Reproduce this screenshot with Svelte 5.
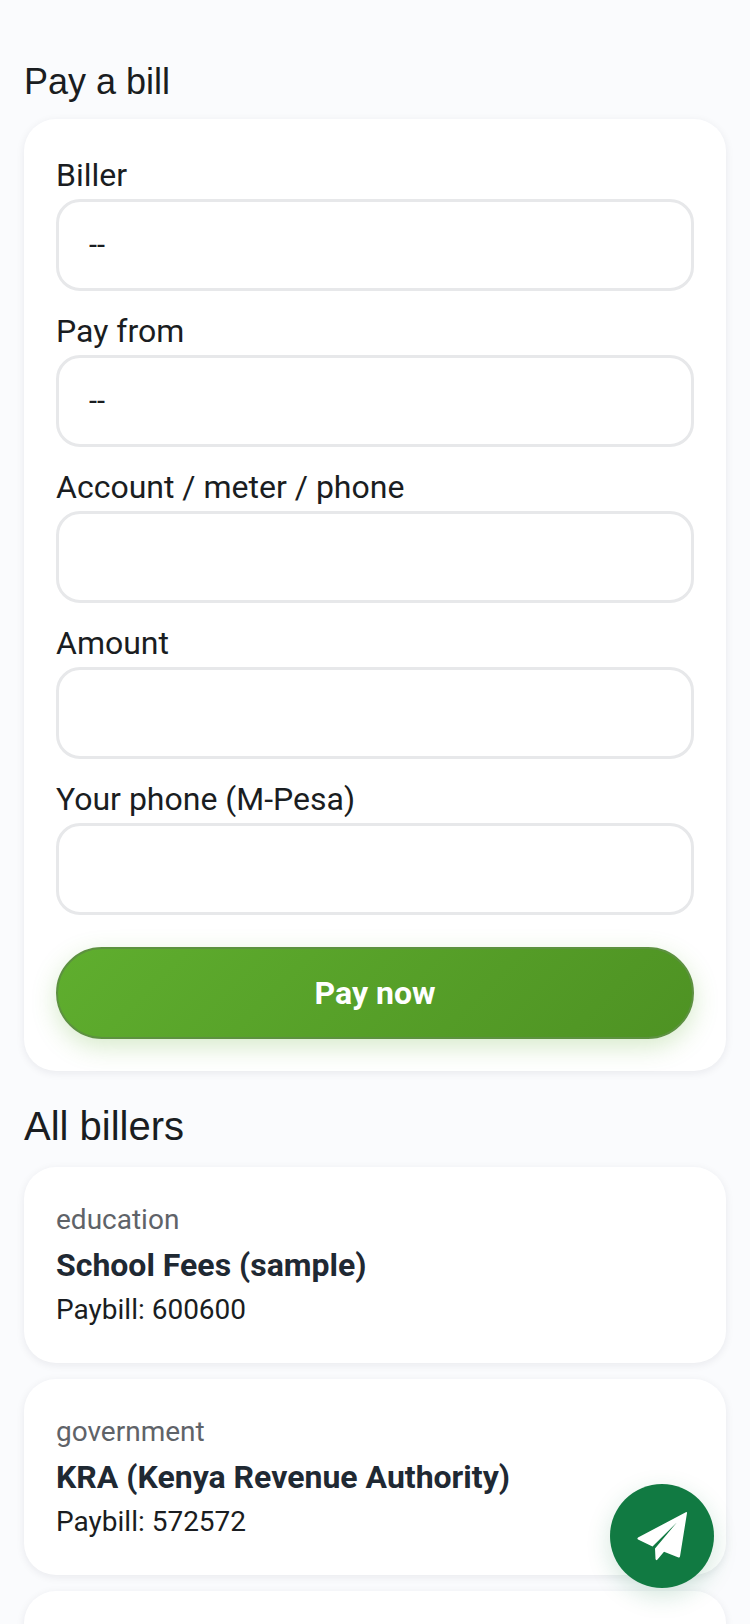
<script lang="ts">
	const fields = [
		{ label: 'Biller', kind: 'select' },
		{ label: 'Pay from', kind: 'select' },
		{ label: 'Account / meter / phone', kind: 'input' },
		{ label: 'Amount', kind: 'input' },
		{ label: 'Your phone (M-Pesa)', kind: 'input' }
	];

	const billers = [
		{ category: 'education', name: 'School Fees (sample)', paybill: '600600' },
		{ category: 'government', name: 'KRA (Kenya Revenue Authority)', paybill: '572572' }
	];
</script>

<main class="page">
	<h2 class="title">Pay a bill</h2>
	<form class="card form" onsubmit={(e) => e.preventDefault()}>
		{#each fields as field}
			<label class="field">
				<span class="label">{field.label}</span>
				{#if field.kind === 'select'}
					<select class="control pick">
						<option>--</option>
					</select>
				{:else}
					<input class="control" type="text" />
				{/if}
			</label>
		{/each}
		<button class="pay" type="submit">Pay now</button>
	</form>

	<h2 class="title all">All billers</h2>
	<div class="list">
		{#each billers as biller}
			<div class="card biller">
				<div class="category">{biller.category}</div>
				<div class="name">{biller.name}</div>
				<div class="paybill">Paybill: {biller.paybill}</div>
			</div>
		{/each}
		<div class="card biller"></div>
	</div>
</main>

<button class="fab" aria-label="Send">
	<svg width="70" height="70" viewBox="-3 1 70 70">
		<path d="M55.8 12.2 L8 37.4 Q6.6 38.6 8 39.6 L22.5 46.6 L46.8 22.4 L25 48.5 L25.5 59 Q26 61 27.5 59.5 L34 51.7 L48.5 57.5 Q49.8 57.9 50 56.5 L57 13 Q57.1 11.6 55.8 12.2 Z" fill="#fff"/>
	</svg>
</button>

<style>
	:global(body) {
		margin: 0;
		background: #fafbfd;
		font-family: Roboto, sans-serif;
		color: #1a1d21;
	}

	.page {
		height: 1624px;
		overflow: hidden;
		box-sizing: border-box;
		padding: 60px 24px 0;
	}

	.title {
		margin: 0 0 15px;
		font-family: 'Liberation Sans', Arial, sans-serif;
		font-size: 36px;
		font-weight: 400;
		line-height: 44px;
		color: #1a1d21;
	}

	.title.all {
		margin: 32px 0 18px;
		font-size: 40px;
		line-height: 46px;
	}

	.card {
		background: #fff;
		border-radius: 32px;
		box-shadow: 0 2px 8px rgba(20, 30, 50, 0.08);
	}

	.form {
		display: flex;
		flex-direction: column;
		gap: 16px;
		padding: 32px;
	}

	.field {
		display: flex;
		flex-direction: column;
	}

	.label {
		font-size: 32px;
		line-height: 48px;
		color: #1a1d21;
	}

	.control {
		box-sizing: border-box;
		width: 100%;
		height: 92px;
		padding: 0 30px;
		background: #fff;
		border: 3px solid #e7e8ea;
		border-radius: 24px;
		font-family: Roboto, sans-serif;
		font-size: 29px;
		color: #1a1d21;
		appearance: none;
		outline: none;
	}

	.pick {
		padding-bottom: 1px;
	}

	.pay {
		height: 92px;
		margin-top: 16px;
		background: linear-gradient(135deg, #5fae2e, #4e9223);
		border: 2px solid #5d9140;
		border-radius: 46px;
		box-shadow: 0 8px 24px rgba(95, 174, 46, 0.25);
		font-family: Roboto, sans-serif;
		font-size: 32px;
		font-weight: 700;
		color: #fff;
	}

	.list {
		display: flex;
		flex-direction: column;
		gap: 16px;
	}

	.biller {
		box-sizing: border-box;
		height: 196px;
		padding: 32px;
	}

	.category {
		font-size: 28px;
		line-height: 42px;
		color: #5f6368;
	}

	.name {
		font-size: 32px;
		font-weight: 700;
		line-height: 48px;
		color: #1f2933;
	}

	.paybill {
		font-size: 28px;
		line-height: 42px;
		color: #1a1d21;
	}

	.fab {
		position: fixed;
		right: 36px;
		bottom: 36px;
		display: flex;
		align-items: center;
		justify-content: center;
		width: 104px;
		height: 104px;
		padding: 0;
		background: #117a42;
		border: none;
		border-radius: 50%;
		box-shadow: 0 8px 24px rgba(17, 122, 66, 0.18);
	}
</style>
